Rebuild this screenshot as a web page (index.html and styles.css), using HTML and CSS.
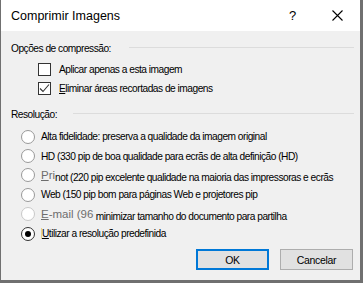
FILE: index.html
```html
<!DOCTYPE html>
<html lang="pt">
  <head>
    <meta charset="UTF-8" />
    <title>Comprimir Imagens</title>
    <link rel="stylesheet" href="styles.css">
  </head>
  <body>
    <div class="dialog">
      <div class="titlebar">
        <span class="title">Comprimir Imagens</span>
        <span class="help">?</span>
        <span class="close">
          <svg width="11" height="11" viewBox="0 0 11 11">
            <path d="M0.5 0.5 L10.5 10.5 M10.5 0.5 L0.5 10.5" stroke="#000" stroke-width="1.1" fill="none" />
          </svg>
        </span>
      </div>

      <div class="content">
        <div class="group-header"><span>Opções de compressão:</span></div>
        <div class="checks">
          <label class="row">
            <span class="box"></span>
            <span>Aplicar apenas a esta imagem</span>
          </label>
          <label class="row">
            <span class="box">
              <svg width="11" height="11" viewBox="0 0 11 11">
                <path d="M1 5.5 L4 8.5 L10 1.5" stroke="#333" stroke-width="1.1" fill="none" />
              </svg>
            </span>
            <span><u>E</u>liminar áreas recortadas de imagens</span>
          </label>
        </div>

        <div class="group-header res"><span>Resolução:</span></div>
        <div class="radios">
          <label class="row">
            <span class="dot"></span>
            <span>Alta fidelidade: preserva a qualidade da imagem original</span>
          </label>
          <label class="row">
            <span class="dot"></span>
            <span>HD (330 pip de boa qualidade para ecrãs de alta definição (HD)</span>
          </label>
          <label class="row">
            <span class="dot"></span>
            <span><span class="big"><u>P</u>ri</span><span class="low">not (220 pip excelente qualidade na maioria das impressoras e ecrãs</span></span>
          </label>
          <label class="row">
            <span class="dot"></span>
            <span>Web (150 pip bom para páginas Web e projetores pip</span>
          </label>
          <label class="row">
            <span class="dot faded"></span>
            <span><span class="big"><u>E</u>-mail (96</span> <span class="low">minimizar tamanho do documento para partilha</span></span>
          </label>
          <label class="row">
            <span class="dot checked"></span>
            <span class="focus"><u>U</u>tilizar a resolução predefinida</span>
          </label>
        </div>

        <div class="buttons">
          <button type="button" class="btn default">OK</button>
          <button type="button" class="btn">Cancelar</button>
        </div>
      </div>
    </div>
  </body>
</html>
```

FILE: styles.css
```css
body {
  margin: 0;
  background-color: #707070;
  font-family: "Liberation Sans", Arial, sans-serif;
}
.dialog {
  width: 359px;
  height: 280px;
  margin-left: 1px;
  background-color: #f0f0f0;
  display: flex;
  flex-direction: column;
}
.titlebar {
  height: 31px;
  background: white;
  display: flex;
  align-items: center;
  padding-left: 10px;
  flex-shrink: 0;
}
.title {
  font-size: 12.5px;
  color: #000;
  flex: 1;
}
.help {
  font-size: 13px;
  width: 14px;
  margin-right: 29px;
}
.close {
  display: flex;
  margin-right: 17px;
}
.content {
  flex: 1;
  display: flex;
  flex-direction: column;
  padding: 9px 6px 10px 10px;
  font-size: 10.2px;
  letter-spacing: -0.5px;
  color: #000;
}
.group-header {
  display: flex;
  align-items: center;
  height: 16px;
}
.group-header::after {
  content: "";
  flex: 1;
  height: 1px;
  background-color: #dcdcdc;
  margin-left: 18px;
  margin-top: -2px;
}
.group-header.res::after {
  margin-left: 16px;
}
.checks {
  padding: 4px 0 8px 27px;
}
.row {
  display: flex;
  align-items: center;
  gap: 8px;
  height: 19px;
  white-space: nowrap;
}
.box {
  width: 11px;
  height: 11px;
  border: 1px solid #333;
  background: white;
  display: flex;
  align-items: center;
  justify-content: center;
}
.res {
  margin-bottom: 5px;
}
.radios {
  padding-left: 10px;
}
.radios .row {
  height: 19.4px;
  gap: 6px;
}
.dot {
  width: 12px;
  height: 12px;
  border: 1px solid #999;
  border-radius: 50%;
  background: white;
  display: flex;
  align-items: center;
  justify-content: center;
}
.dot.faded {
  border-color: #c8c8c8;
}
.dot.checked {
  border-color: #333;
}
.dot.checked::after {
  content: "";
  width: 6px;
  height: 6px;
  border-radius: 50%;
  background: #000;
}
.big {
  font-size: 11.5px;
  letter-spacing: 0;
  color: #6d6d6d;
}
.low {
  position: relative;
  top: 2px;
}
.focus {
  border-left: 1px solid #e8d48a;
}
.buttons {
  margin-top: auto;
  display: flex;
  justify-content: flex-end;
  gap: 11px;
  padding-right: 1px;
}
.btn {
  width: 73px;
  height: 21px;
  font-family: "Liberation Sans", Arial, sans-serif;
  font-size: 10.5px;
  letter-spacing: -0.3px;
  background-color: #e1e1e1;
  border: 1px solid #adadad;
  color: #000;
  padding: 0;
}
.btn.default {
  border: 2px solid #0078d7;
}
```
